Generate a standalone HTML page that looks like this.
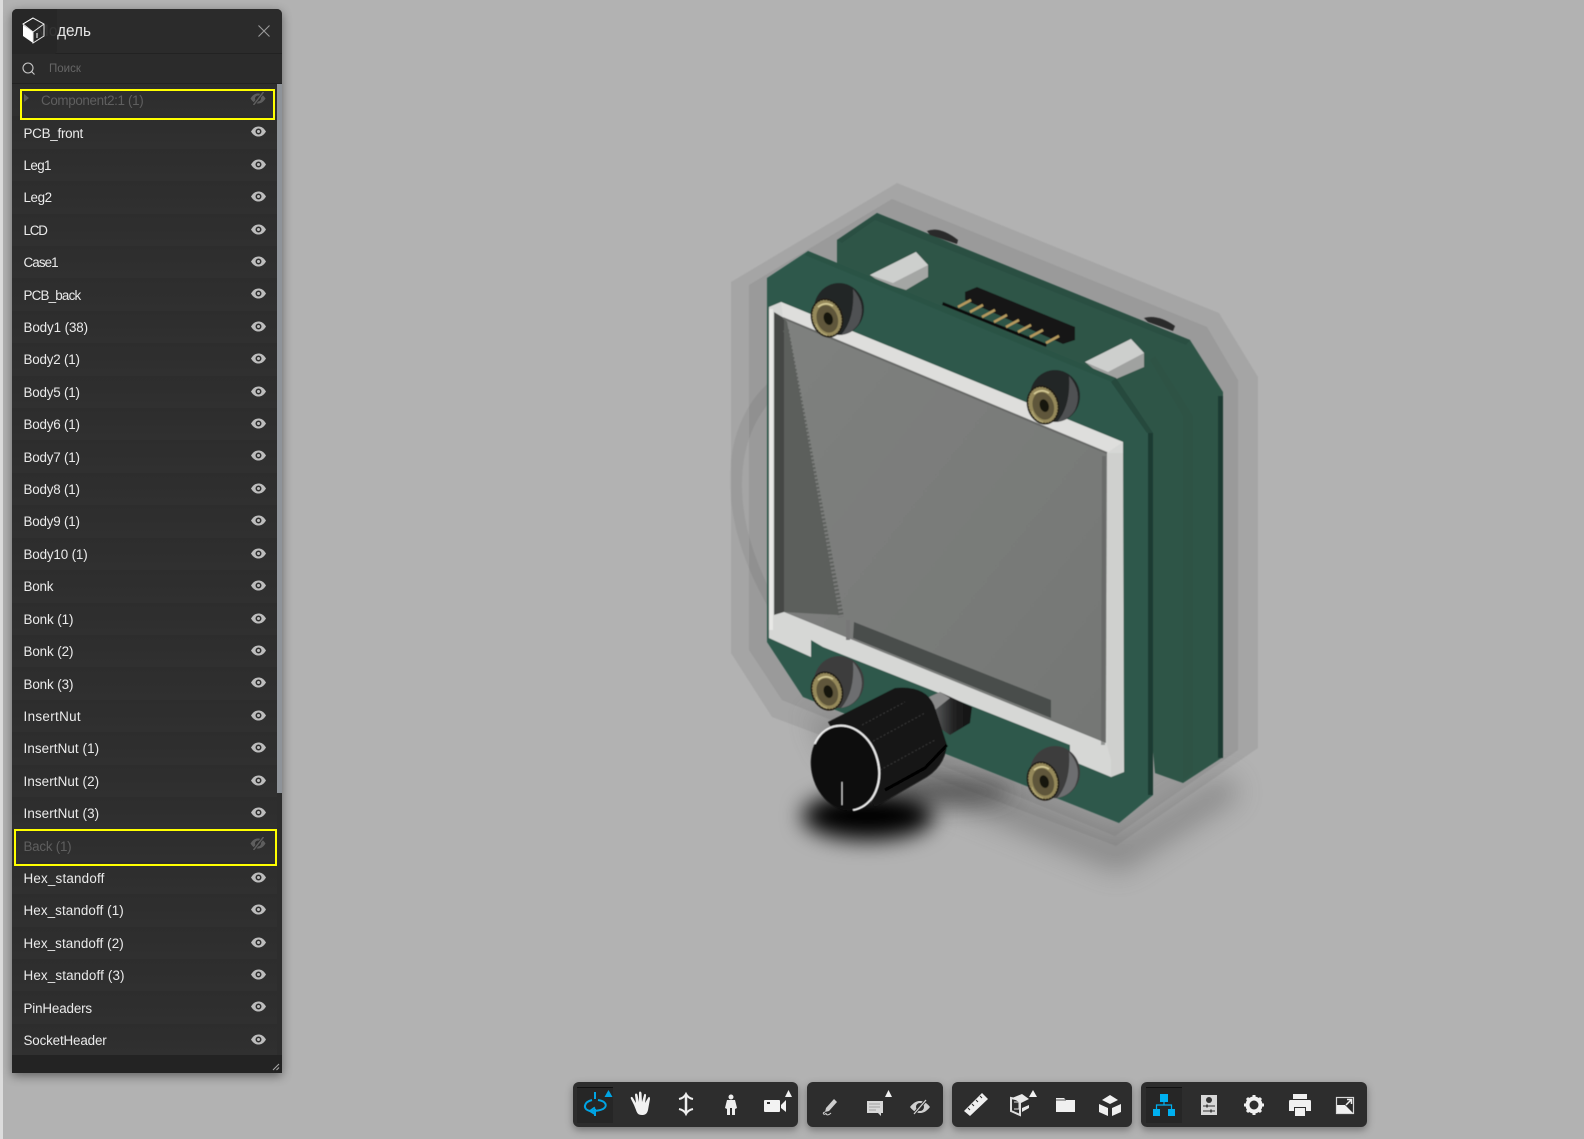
<!DOCTYPE html>
<html><head><meta charset="utf-8"><title>Модель</title>
<style>
html,body{margin:0;padding:0;width:1584px;height:1139px;overflow:hidden;background:#b2b2b2;font-family:"Liberation Sans","Noto Sans CJK JP",sans-serif}
#edge{position:absolute;left:0;top:0;width:3px;height:1139px;background:#dcdcdc}
#scene{position:absolute;left:0;top:0}
#panel{position:absolute;left:12px;top:9px;width:270px;height:1064px;background:#2d2d2d;border-radius:5px 5px 0 0;box-shadow:0 3px 10px rgba(0,0,0,.45);overflow:hidden}
#hdr{position:absolute;left:0;top:0;width:270px;height:44px;background:#2b2b2b;border-bottom:1px solid #222}
#hdr span{position:absolute;left:24px;top:11px;font-size:17px;line-height:22px;color:#e6e6e6;transform:scaleX(.9);transform-origin:0 0}
#ico{position:absolute;left:0;top:0;width:45px;height:46px;background:rgba(39,39,39,.94);border-radius:5px 0 5px 0}
#search{position:absolute;left:0;top:45px;width:270px;height:29px;background:#2b2b2b;border-bottom:1px solid #222}
#search span{position:absolute;left:37px;top:8px;font-size:11.5px;line-height:14px;color:#666}
#rows{position:absolute;left:0;top:75px;width:265px}
.r{position:relative;height:32.41px;font-size:13.4px;color:#ebebeb;background:linear-gradient(#2d2d2d,#303030)}
.r b{font-weight:400;position:absolute;left:11.5px;top:9.2px;line-height:16px;white-space:nowrap}
.r svg{position:absolute;left:239px;top:10px}
.h{color:#5f5f5f}
#bar{position:absolute;left:265px;top:75px;width:5px;height:709px;background:#8e9399}
#foot{position:absolute;left:0;top:1046px;width:270px;height:18px;background:#232323}
.y{position:absolute;border:2px solid #ffff00;box-sizing:border-box}
.t{position:absolute;top:1082px;height:45px;background:#2d2d2d;border-radius:6px;box-shadow:0 3px 8px rgba(0,0,0,.35)}
.act{position:absolute;width:36px;height:35px;top:1087px;background:#262626;border-top:1px solid #111}
</style></head><body>
<div id="edge"></div>
<svg id="scene" width="1584" height="1139" viewBox="0 0 1584 1139">
<defs>
<filter id="soft" x="-10%" y="-10%" width="120%" height="120%"><feGaussianBlur stdDeviation=".55"/></filter>
<filter id="b9" x="-60%" y="-100%" width="220%" height="300%"><feGaussianBlur stdDeviation="11"/></filter>
<filter id="b16" x="-30%" y="-60%" width="160%" height="220%"><feGaussianBlur stdDeviation="14"/></filter>
<linearGradient id="glass" x1="0" y1="0" x2="1" y2="1"><stop offset="0" stop-color="#7f817f"/><stop offset="1" stop-color="#757775"/></linearGradient>
<linearGradient id="sh" x1="0" y1="0" x2="1" y2="0"><stop offset="0" stop-color="#6d6f70"/><stop offset=".6" stop-color="#222"/><stop offset="1" stop-color="#111"/></linearGradient>
<clipPath id="gc"><path d="M783 318L1107 453L1106 743L784 612Z"/></clipPath>
<g id="brass">
<ellipse cx="0" cy="0" rx="16" ry="20" transform="rotate(-18)" fill="#201e14"/>
<ellipse cx="0" cy="0" rx="14.500" ry="18.500" transform="rotate(-18)" fill="#94885a" stroke="#1f1d12" stroke-width="1" stroke-dasharray="1.500 1.500"/>
<ellipse cx="0" cy="1" rx="10.500" ry="14" transform="rotate(-18)" fill="#5f573a"/>
<ellipse cx="1" cy="1" rx="4.500" ry="6.500" transform="rotate(-18)" fill="#181610"/>
<path d="M-9-11q7-6 15-1" stroke="#d6cc98" stroke-width="1.500" fill="none"/>
<path d="M-11 6q3 9 11 11" stroke="#b3a874" stroke-width="1.200" fill="none"/>
</g>
<g id="nut">
<ellipse cx="12" cy="-9" rx="25" ry="26" fill="#242526"/>
<path d="M26 -29Q40 -13 32 5Q26 15 14 17Q28 1 26 -29Z" fill="#505152"/>
<use href="#brass"/>
</g>
<g id="nut2">
<ellipse cx="12" cy="-9" rx="25" ry="26" fill="#3c3d3e"/>
<path d="M26 -29Q40 -13 32 5Q26 15 14 17Q28 1 26 -29Z" fill="#6d6e6f"/>
<use href="#brass"/>
</g>
</defs>
<g filter="url(#soft)">
<!-- ghost body -->
<path d="M731 282L897 183L1219 313L1258 377V748L1116 846L1095 838L772 717L731 653Z" fill="#a5a5a5"/>
<path d="M749 285L892 199L1207 327L1238 380V750L1115 836L782 700L749 650Z" fill="#9a9a9a"/>
<circle r="177" transform="matrix(1 .4 0 1 913 553)" fill="none" stroke="#000" stroke-opacity=".06" stroke-width="12"/>
</g>
<!-- shadows -->
<path d="M810 712L1120 838L1225 775L1240 795L1120 872L830 755Z" fill="#555" opacity=".45" filter="url(#b16)"/>
<ellipse cx="952" cy="792" rx="60" ry="14" fill="#333" opacity=".55" filter="url(#b9)"/>
<ellipse cx="868" cy="816" rx="66" ry="24" fill="#050505" filter="url(#b9)"/>
<g filter="url(#soft)">
<!-- back plate -->
<path d="M837 240L877 213L1190 340L1223 392V757L1183 783L1155 773L1120 400L837 280Z" fill="#2f5547"/>
<path d="M837 240L877 213L1190 340L1186 345L875 220L842 243Z" fill="#2b4f43"/>
<path d="M1155 356L1193 416V772L1183 780V416L1150 360Z" fill="#2d5245"/>
<rect x="1218" y="396" width="5" height="362" fill="#1d3a31"/>
<path d="M927 231Q940 226 958 240L957 244L930 235Z" fill="#2a2b2b"/>
<path d="M1144 318Q1158 314 1175 326L1173 331L1148 322Z" fill="#2a2b2b"/>
<!-- spacers -->
<path d="M870 275L916 252L928 265V277L906 290L880 282Z" fill="#a4a6a4"/>
<path d="M870 275L916 252L928 265L893 283Z" fill="#cdcfcd"/>
<path d="M1085 362L1131 339L1144 353V367L1116 379L1095 370Z" fill="#a0a2a0"/>
<path d="M1085 362L1131 339L1144 353L1108 372Z" fill="#cdcfcd"/>
<!-- header -->
<path d="M965 292L977 287L1075 327V340L1063 344L965 300Z" fill="#181818"/>
<path d="M943 302L1047 344L1046 347L942 305Z" fill="#111"/>
<g stroke="#b59a5e" stroke-width="2.500"><path d="M958 307L971 300M970 312L983 305M982 317L995 310M994 322L1007 315M1006 327L1019 320M1018 332L1031 325M1030 337L1043 330M1046 343L1059 336"/></g>
<!-- front plate -->
<path d="M767 278L808 251L1116 378L1153 433V795L1119 823L803 697L767 642Z" fill="#2d594b"/>
<path d="M808 251L1116 378L1112 382L805 255Z" fill="#2a5245"/>
<path d="M1116 378L1153 433H1147L1111 382Z" fill="#26483d"/>
<rect x="1148" y="433" width="5" height="362" fill="#1d3a31"/>
<!-- bezel -->
<path d="M769 307L781 302L1123 442L1124 772L1111 777L1070 760V745L823 647L811 640V657L769 638Z" fill="#d6d7d5"/>
<path d="M781 302L1123 442L1107 453L783 318Z" fill="#dededc"/>
<path d="M1107 453H1123V772L1111 777V760L1107 745Z" fill="#cfd0ce"/>
<path d="M783 318L1107 453L1106 743L784 612Z" fill="url(#glass)"/>
<path d="M774 312L784 318V612L774 615Z" fill="#454745"/>
<path d="M784 318L787 322L839 615L784 612Z" fill="#5c5e5c"/>
<path d="M786 330L841 617" stroke="#5c5e5c" stroke-width="6" stroke-dasharray="2 2"/>
<path d="M771 309V630" stroke="#e8e8e6" stroke-width="4"/>
<path d="M1104 456L1103 745" fill="none" stroke="#5e605e" stroke-width="4" opacity=".55"/>
<path d="M783 318L1107 453" stroke="#666866" stroke-width="2"/>
<path d="M854 622L1051 700V718L853 638Z" fill="#494e4c"/>
<path d="M848 620V640" stroke="#777" stroke-width="4"/>
<circle r="175" transform="matrix(1 .4 0 1 913 553)" fill="none" stroke="#8a8c8a" stroke-width="1.500" clip-path="url(#gc)"/>
<!-- nuts -->
<use href="#nut" x="827" y="318"/>
<use href="#nut" x="1043" y="405"/>
<use href="#nut2" x="827" y="691"/>
<use href="#nut2" x="1043" y="781"/>
<!-- shaft -->
<path d="M927 698L940 692L972 707L970 723L950 735L935 725Z" fill="url(#sh)"/>
<path d="M927 698L940 692L950 698L935 710Z" fill="#8a8a8a"/>
<!-- knob -->
<path d="M828 722L895 688Q925 685 934 705L947 745Q945 765 927 777L875 807Z" fill="#121212"/>
<path d="M862 725L905 702M866 745L925 713M880 770L935 740" stroke="#3a3a3a" stroke-width="1" stroke-dasharray="2 2"/>
<path d="M885 790L925 768L947 745" stroke="#050505" stroke-width="3" fill="none"/>
<ellipse cx="845" cy="768" rx="33.500" ry="43" transform="rotate(-15 845 768)" fill="#0c0c0c"/>
<ellipse cx="845" cy="768" rx="33.500" ry="43" transform="rotate(-15 845 768)" fill="none" stroke="#efefef" stroke-width="2" pathLength="360" stroke-dasharray="95 135 130 0"/>
<path d="M842 782V805" stroke="#c8c8c8" stroke-width="1"/>
</g>
</svg>

<div id="panel">
<div id="hdr"><span>Модель</span></div>
<div id="ico"><svg width="45" height="46" viewBox="0 0 45 46" style="position:absolute;left:0;top:0"><path d="M11 16L21 23V34L11 27Z" fill="#fff"/><path d="M11 15L21 9L32 15V27L21 34V23ZM21 23L32 15" fill="none" stroke="#e8e8e8" stroke-width="1"/><path d="M11 15L21 9M25 24V29" stroke="#fff" stroke-width="1"/></svg></div>
<svg width="15" height="15" viewBox="0 0 15 15" style="position:absolute;left:245px;top:15px"><path d="M1.500 1.500L12.500 12.500M12.500 1.500L1.500 12.500" stroke="#9a9a9a" stroke-width="1.100"/></svg>
<div id="search"><svg width="16" height="16" viewBox="0 0 16 16" style="position:absolute;left:9px;top:7px"><circle cx="7" cy="7" r="5" fill="none" stroke="#c8c8c8" stroke-width="1.100"/><path d="M10.500 10.500L13.500 13.500" stroke="#c8c8c8" stroke-width="1.100"/></svg><span>Поиск</span></div>
<svg width="0" height="0" style="position:absolute"><defs>
<g id="e"><path fill-rule="evenodd" d="M0 5.500C2.500 1.500 5 .5 7.500 .5S12.500 1.500 15 5.500C12.500 9.500 10 10.500 7.500 10.500S2.500 9.500 0 5.500ZM7.500 2.500A3 3 0 1 0 7.500 8.500A3 3 0 1 0 7.500 2.500Z" fill="#bdbdbd"/><circle cx="7.500" cy="5.500" r="1.500" fill="#bdbdbd"/></g>
<g id="x"><path fill-rule="evenodd" d="M0 5.500C2.500 1.500 5 .5 7.500 .5S12.500 1.500 15 5.500C12.500 9.500 10 10.500 7.500 10.500S2.500 9.500 0 5.500ZM7.500 2.500A3 3 0 1 0 7.500 8.500A3 3 0 1 0 7.500 2.500Z" fill="#5e5e5e"/><path d="M3 12L13 -1" stroke="#2d2d2d" stroke-width="3"/><path d="M3 12L13 -1" stroke="#5e5e5e" stroke-width="1.500"/></g>
</defs></svg>
<div id="rows">
<div class="r h"><b style="left:29px;top:9px;letter-spacing:-.35px">Component2:1 (1)</b><svg width="8" height="10" style="left:11px;top:9px"><path d="M1 1L6 5L1 9Z" fill="#5a5a5a"/></svg><svg width="16" height="13" viewBox="0 -1 15 13" style="top:8px;left:238px"><use href="#x"/></svg></div>
<div class="r"><b style="letter-spacing:-.25px">PCB_front</b><svg width="15" height="11"><use href="#e"/></svg></div>
<div class="r"><b style="letter-spacing:-.6px">Leg1</b><svg width="15" height="11"><use href="#e"/></svg></div>
<div class="r"><b style="letter-spacing:-.4px">Leg2</b><svg width="15" height="11"><use href="#e"/></svg></div>
<div class="r"><b style="letter-spacing:-1.2px">LCD</b><svg width="15" height="11"><use href="#e"/></svg></div>
<div class="r"><b style="letter-spacing:-.9px">Case1</b><svg width="15" height="11"><use href="#e"/></svg></div>
<div class="r"><b style="letter-spacing:-.8px">PCB_back</b><svg width="15" height="11"><use href="#e"/></svg></div>
<div class="r"><b style="letter-spacing:-.1px">Body1 (38)</b><svg width="15" height="11"><use href="#e"/></svg></div>
<div class="r"><b style="letter-spacing:-.2px">Body2 (1)</b><svg width="15" height="11"><use href="#e"/></svg></div>
<div class="r"><b style="letter-spacing:-.2px">Body5 (1)</b><svg width="15" height="11"><use href="#e"/></svg></div>
<div class="r"><b style="letter-spacing:-.2px">Body6 (1)</b><svg width="15" height="11"><use href="#e"/></svg></div>
<div class="r"><b style="letter-spacing:-.2px">Body7 (1)</b><svg width="15" height="11"><use href="#e"/></svg></div>
<div class="r"><b style="letter-spacing:-.2px">Body8 (1)</b><svg width="15" height="11"><use href="#e"/></svg></div>
<div class="r"><b style="letter-spacing:-.2px">Body9 (1)</b><svg width="15" height="11"><use href="#e"/></svg></div>
<div class="r"><b style="letter-spacing:-.15px">Body10 (1)</b><svg width="15" height="11"><use href="#e"/></svg></div>
<div class="r"><b style="letter-spacing:-.2px">Bonk</b><svg width="15" height="11"><use href="#e"/></svg></div>
<div class="r"><b style="letter-spacing:-.1px">Bonk (1)</b><svg width="15" height="11"><use href="#e"/></svg></div>
<div class="r"><b style="letter-spacing:-.1px">Bonk (2)</b><svg width="15" height="11"><use href="#e"/></svg></div>
<div class="r"><b style="letter-spacing:-.1px">Bonk (3)</b><svg width="15" height="11"><use href="#e"/></svg></div>
<div class="r"><b style="letter-spacing:.35px">InsertNut</b><svg width="15" height="11"><use href="#e"/></svg></div>
<div class="r"><b style="letter-spacing:.1px">InsertNut (1)</b><svg width="15" height="11"><use href="#e"/></svg></div>
<div class="r"><b style="letter-spacing:.1px">InsertNut (2)</b><svg width="15" height="11"><use href="#e"/></svg></div>
<div class="r"><b style="letter-spacing:.1px">InsertNut (3)</b><svg width="15" height="11"><use href="#e"/></svg></div>
<div class="r h"><b style="letter-spacing:-.25px">Back (1)</b><svg width="16" height="13" viewBox="0 -1 15 13" style="top:8px;left:238px"><use href="#x"/></svg></div>
<div class="r"><b style="letter-spacing:.2px">Hex_standoff</b><svg width="15" height="11"><use href="#e"/></svg></div>
<div class="r"><b style="letter-spacing:.1px">Hex_standoff (1)</b><svg width="15" height="11"><use href="#e"/></svg></div>
<div class="r"><b style="letter-spacing:.1px">Hex_standoff (2)</b><svg width="15" height="11"><use href="#e"/></svg></div>
<div class="r"><b style="letter-spacing:.15px">Hex_standoff (3)</b><svg width="15" height="11"><use href="#e"/></svg></div>
<div class="r"><b style="letter-spacing:-.15px">PinHeaders</b><svg width="15" height="11"><use href="#e"/></svg></div>
<div class="r"><b style="letter-spacing:-.15px">SocketHeader</b><svg width="15" height="11"><use href="#e"/></svg></div>
</div>
<div id="bar"></div>
<div id="foot"><svg width="8" height="8" style="position:absolute;left:260px;top:8px"><path d="M1 7L7 1M4.500 7L7 4.500" stroke="#aaa" stroke-width="1"/></svg></div>
</div>
<div class="y" style="left:20px;top:89px;width:255px;height:31px"></div>
<div class="y" style="left:14px;top:829px;width:263px;height:37px"></div>

<div class="t" style="left:573px;width:225px"></div>
<div class="t" style="left:807px;width:136px"></div>
<div class="t" style="left:952px;width:180px"></div>
<div class="t" style="left:1141px;width:226px"></div>
<div class="act" style="left:577px"></div>
<div class="act" style="left:1146px"></div>
<svg width="1584" height="1139" viewBox="0 0 1584 1139" style="position:absolute;left:0;top:0;pointer-events:none">
<!-- orbit -->
<g fill="none" stroke="#00a4e4" stroke-width="2"><path d="M595 1092V1099M595 1109V1116"/><path d="M590 1111C582 1109 584 1102 592 1100M598 1100C606 1101 608 1106 603 1109C600 1110.500 596 1111 591 1111"/><path d="M595 1107.500L590 1111L595 1114"/></g>
<path d="M604.500 1097L608.500 1090L612.500 1097Z" fill="#00a4e4"/>
<!-- hand -->
<path d="M634 1105L631 1099C630 1097 632 1096 633 1098L636 1103L635 1095C635 1093 637 1093 637.500 1095L639 1102V1093C639 1091 641 1091 641.500 1093L642 1102L644 1095C644.500 1093 646.500 1094 646 1096L645 1103L648 1098C649 1096 650 1097 650 1099L648 1110C647 1114 645 1115 642 1115C638 1115 637 1113 636 1110Z" fill="#f2f2f2"/>
<!-- vertical arrows -->
<path d="M686 1095V1113" fill="none" stroke="#eee" stroke-width="2.500"/><path d="M679 1099Q684 1098 686 1094Q688 1098 693 1099M679 1109Q684 1110 686 1114Q688 1110 693 1109" fill="none" stroke="#eee" stroke-width="2"/>
<!-- person -->
<circle cx="731" cy="1097" r="2.500" fill="#eee"/><path d="M727 1100H735L737 1108L735 1109V1115H732V1108H730V1115H727V1109L725 1108Z" fill="#eee"/>
<!-- camera -->
<rect x="764" y="1100" width="16" height="12" rx="1" fill="#f2f2f2"/><path d="M781 1105L786 1100V1112L781 1108Z" fill="#f2f2f2"/><rect x="767" y="1102" width="3" height="2" fill="#2d2d2d"/>
<path d="M785 1097L788.500 1090L792 1097Z" fill="#f2f2f2"/>
<!-- pen -->
<path d="M826 1108L834 1099L837 1102L829 1111L825 1112Z" fill="#cfcfcf"/><path d="M825 1112C821 1113 825 1116 826 1113C826 1116 829 1115 831 1113" fill="none" stroke="#cfcfcf"/>
<!-- comment -->
<path d="M867 1101H883V1113H881V1116L878 1113H867Z" fill="#d8d8d8"/><path d="M869 1104H880M869 1107H880M869 1110H876" stroke="#8c8c8c" stroke-width=".8"/>
<path d="M885 1097L888.500 1090L892 1097Z" fill="#f2f2f2"/>
<!-- hide -->
<path fill-rule="evenodd" d="M910 1107C914 1102 917 1101 920 1101S926 1102 930 1107C926 1112 923 1113 920 1113S914 1112 910 1107ZM920 1103A4 4 0 1 0 920 1111A4 4 0 1 0 920 1103Z" fill="#cfcfcf"/><path d="M914 1114L926 1100" stroke="#2d2d2d" stroke-width="3"/><path d="M914 1114L926 1100" stroke="#cfcfcf" stroke-width="1.300"/>
<!-- ruler -->
<path d="M964 1111L982 1093L988 1099L970 1116Z" fill="#f0f0f0"/><path d="M968 1108L970 1110M972 1104L974 1106M976 1100L978 1102M980 1096L982 1098" stroke="#2d2d2d"/>
<!-- box -->
<path d="M1011 1098L1020 1100V1115L1011 1111Z" fill="none" stroke="#dedede" stroke-width="2"/><path d="M1014 1102H1019V1109H1014" fill="none" stroke="#dedede"/><path d="M1012 1098L1022 1094L1029 1099L1021 1103Z M1022 1108L1029 1105V1108L1022 1112Z" fill="#e8e8e8"/>
<path d="M1029 1097L1033 1090L1037 1097Z" fill="#f2f2f2"/>
<!-- folder -->
<path d="M1056 1098H1064L1066 1100H1075V1112H1056Z" fill="#f0f0f0"/><path d="M1056 1100H1066" stroke="#2d2d2d" stroke-width=".8"/>
<!-- explode cube -->
<path d="M1110 1095L1118 1100L1110 1104L1102 1100ZM1099 1104L1108 1108V1116L1099 1112ZM1121 1104V1112L1112 1116V1108Z" fill="#f0f0f0"/>
<!-- tree -->
<rect x="1160" y="1094" width="8" height="8" fill="#00b0f0"/><rect x="1153" y="1109" width="7" height="7" fill="#00b0f0"/><rect x="1168" y="1109" width="7" height="7" fill="#00b0f0"/><path d="M1164 1102V1105M1156.500 1109V1105H1171.500V1109" fill="none" stroke="#00b0f0" stroke-width="1.200"/>
<!-- props -->
<rect x="1201" y="1095" width="16" height="20" fill="#d8d8d8"/><circle cx="1209" cy="1100" r="3" fill="#333"/><path d="M1203 1106H1215M1203 1111H1215" stroke="#333"/><path d="M1207 1104.500V1107.500M1211 1109.500V1112.500" stroke="#333" stroke-width="1.500"/>
<!-- gear -->
<circle cx="1254" cy="1105" r="6.500" fill="none" stroke="#f0f0f0" stroke-width="4"/><path d="M1254 1095V1115M1244 1105H1264M1247 1098L1261 1112M1261 1098L1247 1112" stroke="#f0f0f0" stroke-width="3" stroke-dasharray="3.200 13.600"/>
<!-- printer -->
<path d="M1293 1094H1307V1099H1293ZM1290 1100H1310Q1311 1100 1311 1102V1111H1306V1107H1294V1111H1289V1102Q1289 1100 1290 1100ZM1295 1108H1305V1116H1295Z" fill="#f0f0f0"/>
<!-- fullscreen -->
<rect x="1336.500" y="1097.500" width="17" height="16" fill="none" stroke="#d8d8d8" stroke-width="1.200"/><path d="M1337 1113V1105H1345L1353 1113Z" fill="#f0f0f0"/><path d="M1346 1105L1351 1100M1347 1099.500H1351.500V1104" fill="none" stroke="#f0f0f0" stroke-width="1.500"/>
</svg>
</body></html>
